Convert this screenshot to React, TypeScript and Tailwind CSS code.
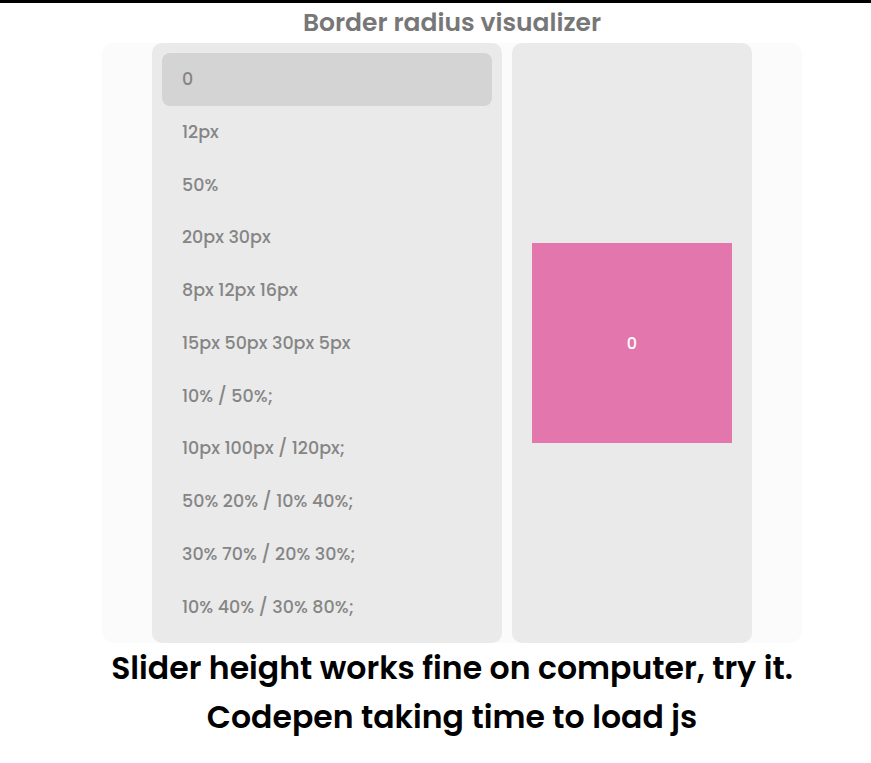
import { useState } from 'react';

const RADII = [
  '0',
  '12px',
  '50%',
  '20px 30px',
  '8px 12px 16px',
  '15px 50px 30px 5px',
  '10% / 50%;',
  '10px 100px / 120px;',
  '50% 20% / 10% 40%;',
  '30% 70% / 20% 30%;',
  '10% 40% / 30% 80%;',
];

export default function App() {
  const [active, setActive] = useState(0);
  const value = RADII[active];

  return (
    <div className="min-h-screen bg-white border-t-[3px] border-black overflow-hidden font-['Poppins','Noto_Sans',sans-serif]">
      <div className="w-[904px]">
        {/* title */}
        <h1 className="pt-[2px] text-center text-[25px] leading-[36px] font-semibold text-[#777777] h-[40px]">
          Border radius visualizer
        </h1>

        {/* visualizer */}
        <div className="mx-auto w-[700px] h-[600px] bg-[#fbfbfb] rounded-xl flex justify-center gap-[10px]">
          <ul className="w-[350px] bg-[#eaeaea] rounded-[10px] p-[10px] flex flex-col">
            {RADII.map((r, i) => (
              <li
                key={r}
                onClick={() => setActive(i)}
                className={`flex-1 px-5 flex items-center text-[17.5px] font-medium text-[#858585] rounded-lg cursor-pointer ${
                  i === active ? 'bg-[#d4d4d4]' : ''
                }`}
              >
                {r}
              </li>
            ))}
          </ul>
          <div className="w-[240px] bg-[#eaeaea] rounded-[10px] flex items-center justify-center">
            <div
              className="w-[200px] h-[200px] pt-[2px] bg-[#e377ad] flex items-center justify-center text-white text-[16px] font-medium"
              style={{ borderRadius: value.replace(';', '') }}
            >
              {value.replace(';', '')}
            </div>
          </div>
        </div>

        <p className="mt-[1px] text-center text-[31.5px] leading-[49px] font-semibold text-black">
          Slider height works fine on computer, try it.
          <br />
          Codepen taking time to load js
        </p>
      </div>
    </div>
  );
}
